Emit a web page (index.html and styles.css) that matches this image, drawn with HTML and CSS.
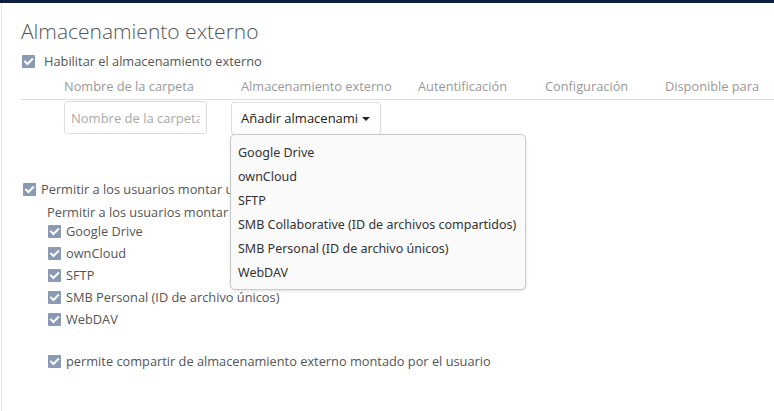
FILE: index.html
```html
<!DOCTYPE html>
<html>
<head>
<meta charset="utf-8">
<link rel="stylesheet" href="styles.css">
</head>
<body>
<div class="topbar"></div>
<div class="page">
  <h2 class="title">Almacenamiento externo</h2>
  <label class="check-row enable">
    <span class="cb"><svg viewBox="0 0 13 13"><path d="M3 6.6 L5.4 9 L10.2 4.2" /></svg></span>
    <span>Habilitar el almacenamiento externo</span>
  </label>

  <div class="mounts">
    <div class="thead">
      <div class="c c0"></div>
      <div class="c c1">Nombre de la carpeta</div>
      <div class="c c2">Almacenamiento externo</div>
      <div class="c c3">Autentificación</div>
      <div class="c c4">Configuración</div>
      <div class="c c5">Disponible para</div>
    </div>
    <div class="trow">
      <div class="c c0"></div>
      <div class="c c1"><input class="folder" type="text" placeholder="Nombre de la carpeta"></div>
      <div class="c c2 sel-cell">
        <div class="select">Añadir almacenami<span class="caret"></span></div>
        <ul class="menu">
          <li>Google Drive</li>
          <li>ownCloud</li>
          <li>SFTP</li>
          <li>SMB Collaborative (ID de archivos compartidos)</li>
          <li>SMB Personal (ID de archivo únicos)</li>
          <li>WebDAV</li>
        </ul>
      </div>
      <div class="c c3"></div>
      <div class="c c4"></div>
      <div class="c c5"></div>
    </div>
  </div>

  <label class="check-row allow">
    <span class="cb"><svg viewBox="0 0 13 13"><path d="M3 6.6 L5.4 9 L10.2 4.2" /></svg></span>
    <span>Permitir a los usuarios montar un almacenamiento externo</span>
  </label>
  <div class="allow-sub">
    <p class="sub-title">Permitir a los usuarios montar los siguientes almacenamientos externos</p>
    <ul class="backends">
      <li class="check-row"><span class="cb"><svg viewBox="0 0 13 13"><path d="M3 6.6 L5.4 9 L10.2 4.2" /></svg></span><span>Google Drive</span></li>
      <li class="check-row"><span class="cb"><svg viewBox="0 0 13 13"><path d="M3 6.6 L5.4 9 L10.2 4.2" /></svg></span><span>ownCloud</span></li>
      <li class="check-row"><span class="cb"><svg viewBox="0 0 13 13"><path d="M3 6.6 L5.4 9 L10.2 4.2" /></svg></span><span>SFTP</span></li>
      <li class="check-row"><span class="cb"><svg viewBox="0 0 13 13"><path d="M3 6.6 L5.4 9 L10.2 4.2" /></svg></span><span>SMB Personal (ID de archivo únicos)</span></li>
      <li class="check-row"><span class="cb"><svg viewBox="0 0 13 13"><path d="M3 6.6 L5.4 9 L10.2 4.2" /></svg></span><span>WebDAV</span></li>
    </ul>
    <label class="check-row share">
      <span class="cb"><svg viewBox="0 0 13 13"><path d="M3 6.6 L5.4 9 L10.2 4.2" /></svg></span>
      <span>permite compartir de almacenamiento externo montado por el usuario</span>
    </label>
  </div>
</div>
</body>
</html>
```

FILE: styles.css
```css
* { box-sizing: border-box; }
html, body { margin: 0; padding: 0; background: #fff; }
body {
  font-family: "Open Sans", "Noto Sans", sans-serif;
  font-size: 12.8px;
  color: #555;
  width: 774px;
  height: 411px;
  overflow: hidden;
}
.topbar { height: 3px; background: #0c1f3d; }
.page {
  margin-left: 1px;
  border-left: 1px solid #e6e6e6;
  height: 408px;
  padding-left: 19px;
  padding-top: 15px;
}
.title {
  margin: 0;
  font-size: 21px;
  font-weight: 300;
  line-height: 26px;
  color: #555;
}
.check-row {
  display: flex;
  align-items: center;
  line-height: 22px;
  white-space: nowrap;
}
.cb {
  width: 13px;
  height: 13px;
  background: #8a9ab4;
  border-radius: 1px;
  flex: none;
  display: inline-flex;
}
.cb svg { width: 13px; height: 13px; }
.cb path { fill: none; stroke: #fff; stroke-width: 2; stroke-linecap: square; }
.enable { margin-top: 6px; padding-left: 1px; }
.enable .cb { margin-right: 9px; }

.mounts { margin-top: 2px; }
.thead, .trow {
  display: grid;
  grid-template-columns: 33px 177px 177px 127px 120px 1fr;
}
.thead {
  border-bottom: 1px solid #ddd;
  height: 26px;
  color: #999;
}
.thead .c { padding-left: 10px; line-height: 24px; white-space: nowrap; }
.trow { padding-top: 1px; height: 63px; }
.trow .c1 { padding-left: 10px; }
input.folder {
  width: 143px;
  height: 33px;
  border: 1px solid #ddd;
  border-radius: 3px;
  font: inherit;
  font-size: 13px;
  padding: 0 6px;
  color: #555;
  outline: none;
  background: #fff;
}
input.folder::placeholder { color: #aaa; }
.sel-cell { position: relative; }
.select {
  width: 150px;
  height: 33px;
  margin-top: 1px;
  border: 1px solid #ddd;
  border-radius: 3px;
  padding-left: 9px;
  line-height: 31px;
  font-size: 13px;
  color: #222;
  white-space: nowrap;
  overflow: hidden;
  display: flex;
  align-items: center;
}
.caret {
  display: inline-block;
  margin-left: 4px;
  border-left: 4px solid transparent;
  border-right: 4px solid transparent;
  border-top: 4px solid #222;
  margin-top: 1px;
}
.menu {
  position: absolute;
  left: -1px;
  top: 33px;
  width: 296px;
  margin: 0;
  padding: 6px 0 4px;
  list-style: none;
  background: #fafafa;
  border: 1px solid #c9c9c9;
  border-radius: 5px;
  box-shadow: 0 1px 3px rgba(0,0,0,0.12);
  font-family: "Noto Sans", "DejaVu Sans", sans-serif;
  font-size: 12.5px;
  color: #333;
  z-index: 10;
}
.menu li {
  line-height: 24px;
  height: 24px;
  padding-left: 7px;
  white-space: nowrap;
}
.allow { padding-left: 2px; margin-top: 15px; }
.allow .cb { margin-right: 5px; }
.allow-sub { padding-left: 26px; }
.sub-title { margin: 1px 0 0; line-height: 22px; white-space: nowrap; }
.backends { list-style: none; margin: -3px 0 0; padding: 0 0 0 1px; }
.backends .cb { margin-right: 5px; }
.share { padding-left: 1px; margin-top: 20px; }
.share .cb { margin-right: 5px; }
```
